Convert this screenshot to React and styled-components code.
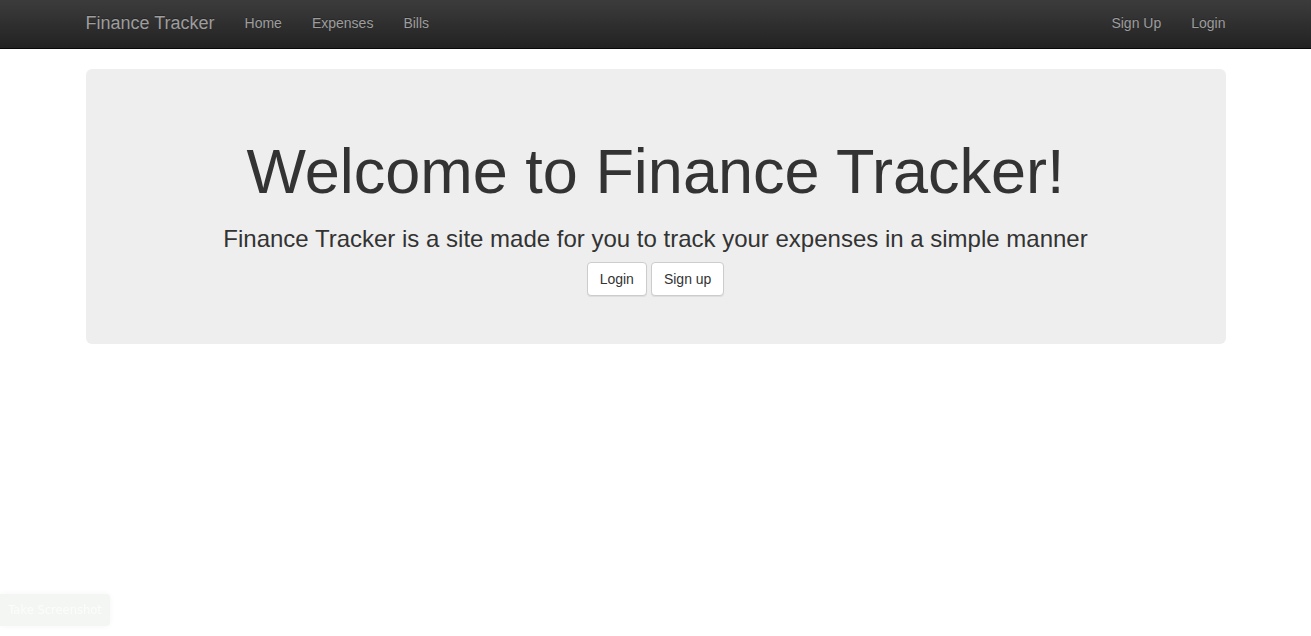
import React from "react";
import styled, { createGlobalStyle } from "styled-components";

const GlobalStyle = createGlobalStyle`
  html, body {
    margin: 0;
    padding: 0;
    background: #fff;
  }
  body {
    font-family: "Liberation Sans", Arial, Helvetica, sans-serif;
    font-size: 14px;
    line-height: 1.42857;
    color: #333;
  }
  * {
    box-sizing: border-box;
  }
`;

const Navbar = styled.nav`
  height: 49px;
  margin-bottom: 20px;
  background-image: linear-gradient(to bottom, #3c3c3c 0, #222 100%);
  border-bottom: 1px solid #080808;
`;

const Container = styled.div`
  width: 1170px;
  margin: 0 auto;
  padding: 0 15px;
`;

const NavInner = styled(Container)`
  display: flex;
  align-items: center;
  height: 100%;
  padding-bottom: 2px;
`;

const Brand = styled.a`
  font-size: 18px;
  line-height: 20px;
  color: #9d9d9d;
  text-decoration: none;
  margin-right: 15px;
  text-shadow: 0 -1px 0 rgba(0, 0, 0, 0.25);
`;

const NavList = styled.ul`
  display: flex;
  list-style: none;
  margin: 0;
  padding: 0;
  margin-left: ${(p) => (p.$right ? "auto" : "0")};
  margin-right: ${(p) => (p.$right ? "-15px" : "0")};
`;

const NavLink = styled.a`
  display: block;
  padding: 14px 15px;
  font-size: 14px;
  line-height: 20px;
  color: #9d9d9d;
  text-decoration: none;
  text-shadow: 0 -1px 0 rgba(0, 0, 0, 0.25);
`;

const Jumbotron = styled.div`
  background: #eee;
  border-radius: 6px;
  padding: 48px 60px;
  text-align: center;
`;

const Title = styled.h1`
  margin: 20px 0 10px;
  font-size: 63px;
  font-weight: 500;
  line-height: 1.1;
  color: #333;
`;

const Subtitle = styled.h3`
  margin: 20px 0 9px;
  font-size: 24px;
  font-weight: 500;
  line-height: 1.1;
  color: #333;
`;

const Actions = styled.div`
  display: flex;
  justify-content: center;
  gap: 4px;
`;

const Button = styled.a`
  display: inline-block;
  padding: 6px 12px;
  font-size: 14px;
  line-height: 20px;
  color: #333;
  background: #fff;
  border: 1px solid #ccc;
  border-radius: 4px;
  text-decoration: none;
  box-shadow: inset 0 1px 0 rgba(255, 255, 255, 0.15), 0 1px 1px rgba(0, 0, 0, 0.075);
`;

const ScreenshotTab = styled.div`
  position: fixed;
  left: 0;
  bottom: 10px;
  width: 110px;
  height: 32px;
  display: flex;
  align-items: center;
  justify-content: center;
  background: #f4f6f4;
  border-radius: 0 4px 4px 0;
  box-shadow: 0 0 6px rgba(0, 0, 0, 0.04);
  color: #fbfcfb;
  font-family: "DejaVu Sans", sans-serif;
  font-size: 11.5px;
`;

export default function App() {
  return (
    <>
      <GlobalStyle />
      <Navbar>
        <NavInner>
          <Brand href="#">Finance Tracker</Brand>
          <NavList>
            <li><NavLink href="#">Home</NavLink></li>
            <li><NavLink href="#">Expenses</NavLink></li>
            <li><NavLink href="#">Bills</NavLink></li>
          </NavList>
          <NavList $right>
            <li><NavLink href="#">Sign Up</NavLink></li>
            <li><NavLink href="#">Login</NavLink></li>
          </NavList>
        </NavInner>
      </Navbar>
      <Container>
        <Jumbotron>
          <Title>Welcome to Finance Tracker!</Title>
          <Subtitle>Finance Tracker is a site made for you to track your expenses in a simple manner</Subtitle>
          <Actions>
            <Button href="#">Login</Button>
            <Button href="#">Sign up</Button>
          </Actions>
        </Jumbotron>
      </Container>
      <ScreenshotTab>Take Screenshot</ScreenshotTab>
    </>
  );
}
